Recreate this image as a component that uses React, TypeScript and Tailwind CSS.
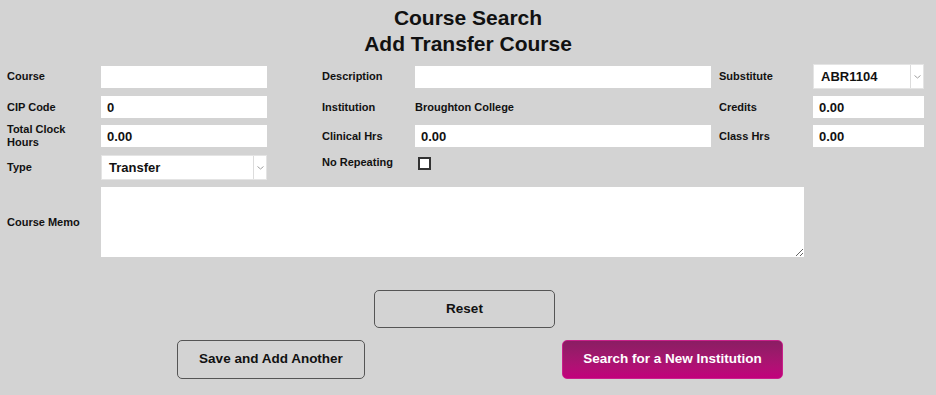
import { useState } from "react";

const font = { fontFamily: '"Liberation Sans", Arial, sans-serif' };

function Label({ children, className = "" }: { children: React.ReactNode; className?: string }) {
  return (
    <div className={`text-[11px] font-bold leading-[13px] text-[#111] ${className}`}>{children}</div>
  );
}

function TextInput({ value = "", width }: { value?: string; width: string }) {
  return (
    <input
      defaultValue={value}
      className={`${width} h-[22px] bg-white px-[6px] text-[13px] font-semibold text-[#111] outline-none`}
    />
  );
}

function FakeSelect({ value, width }: { value: string; width: string }) {
  return (
    <div className={`${width} flex h-[25px] border border-[#e4e4e4] bg-white`}>
      <div className="flex flex-1 items-center pl-[7px] text-[13px] font-bold text-[#111]">{value}</div>
      <div className="flex w-[13px] items-center justify-center border-l border-[#dcdcdc]">
        <svg width="7" height="4" viewBox="0 0 7 4" fill="none">
          <path d="M0.5 0.5 L3.5 3 L6.5 0.5" stroke="#a0a0a0" strokeWidth="1" />
        </svg>
      </div>
    </div>
  );
}

export default function App() {
  const [noRepeat, setNoRepeat] = useState(false);

  return (
    <div className="h-[395px] w-full overflow-hidden bg-[#d3d3d3]" style={font}>
      <div className="pt-[5px] text-center text-[21px] font-bold leading-[26px] text-[#111]">
        <div>Course Search</div>
        <div>Add Transfer Course</div>
      </div>

      {/* row 1 */}
      <div className="mt-[7px] flex h-[25px] items-center pl-[7px]">
        <Label className="w-[94px]">Course</Label>
        <TextInput width="w-[166px]" />
        <Label className="ml-[55px] w-[93px]">Description</Label>
        <TextInput width="w-[296px]" />
        <Label className="ml-[8px] w-[94px]">Substitute</Label>
        <FakeSelect value="ABR1104" width="w-[111px]" />
      </div>

      {/* row 2 */}
      <div className="mt-[7px] flex h-[22px] items-center pl-[7px]">
        <Label className="w-[94px]">CIP Code</Label>
        <TextInput value="0" width="w-[166px]" />
        <Label className="ml-[55px] w-[93px]">Institution</Label>
        <div className="w-[296px] text-[11px] font-bold text-[#111]">Broughton College</div>
        <Label className="ml-[8px] w-[94px]">Credits</Label>
        <TextInput value="0.00" width="w-[111px]" />
      </div>

      {/* row 3 */}
      <div className="mt-[7px] flex h-[22px] items-center pl-[7px]">
        <Label className="w-[94px] leading-[12px]">
          Total Clock
          <br />
          Hours
        </Label>
        <TextInput value="0.00" width="w-[166px]" />
        <Label className="ml-[55px] w-[93px]">Clinical Hrs</Label>
        <TextInput value="0.00" width="w-[296px]" />
        <Label className="ml-[8px] w-[94px]">Class Hrs</Label>
        <TextInput value="0.00" width="w-[111px]" />
      </div>

      {/* row 4 */}
      <div className="mt-[8px] flex h-[25px] items-center pl-[7px]">
        <Label className="w-[94px]">Type</Label>
        <FakeSelect value="Transfer" width="w-[166px]" />
        <div className="ml-[55px] flex self-start">
          <Label className="mt-[1px] w-[96px]">No Repeating</Label>
          <button
            onClick={() => setNoRepeat(!noRepeat)}
            className="mt-[2px] h-[13px] w-[13px] border-2 border-[#333] bg-white"
            aria-label="No Repeating"
          />
        </div>
      </div>

      {/* memo */}
      <div className="mt-[7px] flex items-center pl-[7px]">
        <Label className="w-[94px]">Course Memo</Label>
        <textarea className="h-[70px] w-[703px] bg-white p-1 text-[13px] outline-none" />
      </div>

      <div className="mt-[33px] pl-[374px]">
        <button className="h-[38px] w-[181px] rounded-[5px] border border-[#555] text-[13.5px] font-bold text-[#111]">
          Reset
        </button>
      </div>

      <div className="mt-[12px] flex gap-[197px] pl-[177px]">
        <button className="h-[39px] w-[188px] rounded-[5px] border border-[#555] text-[13.5px] font-bold text-[#111]">
          Save and Add Another
        </button>
        <button className="h-[39px] w-[221px] rounded-[5px] border border-[#c8208a] bg-gradient-to-b from-[#8a1d63] to-[#c2007c] text-[13.5px] font-bold text-white">
          Search for a New Institution
        </button>
      </div>
    </div>
  );
}
